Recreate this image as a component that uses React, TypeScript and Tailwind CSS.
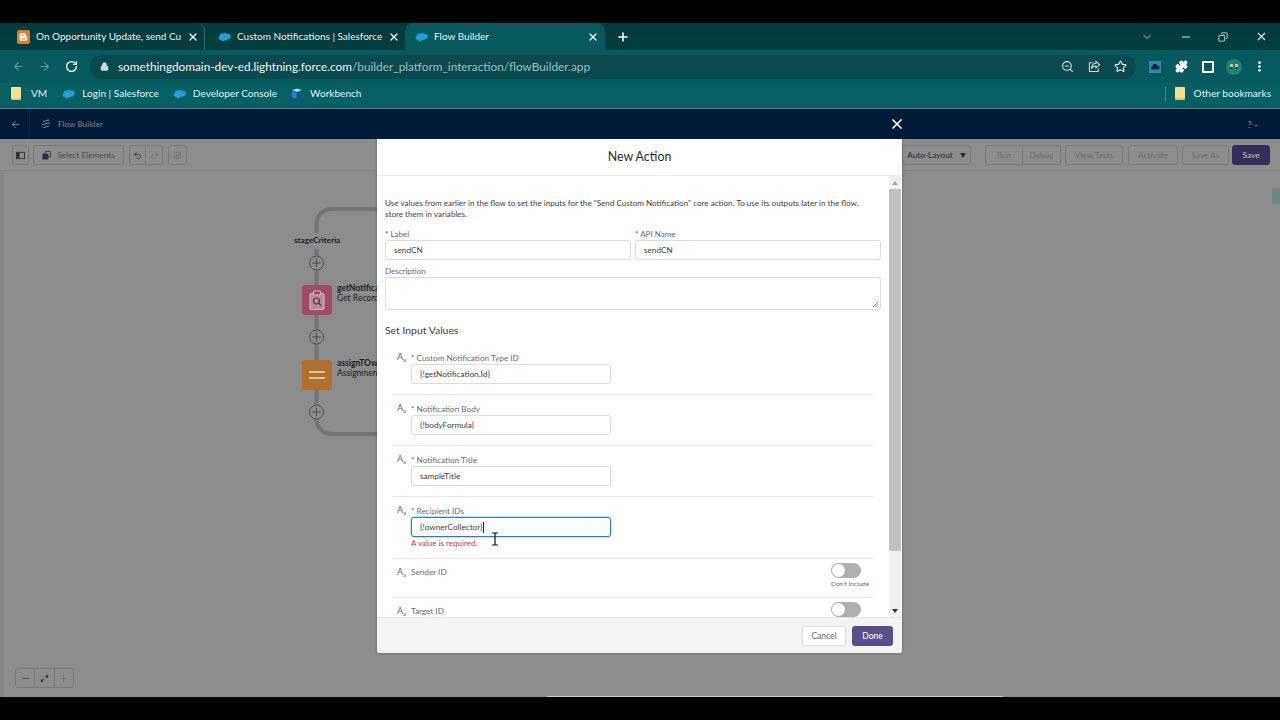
import {
  ArrowLeft,
  ArrowRight,
  ChevronDown,
  Lock,
  Minus,
  Plus,
  RotateCw,
  Star,
  X,
  ZoomOut,
  Puzzle,
  EllipsisVertical,
  Undo2,
  Redo2,
  Settings,
  Copy,
  Equal,
} from "lucide-react"

const sans = "font-['Lato','Open_Sans',sans-serif]"

function Cloud({ className }: { className?: string }) {
  return (
    <svg viewBox="0 0 16 11" className={className}>
      <path
        d="M6.6 1.4A2.9 2.9 0 0 1 8.7.5c1 0 1.9.6 2.4 1.4a3 3 0 0 1 1.3-.3A3.3 3.3 0 0 1 15.7 5a3.3 3.3 0 0 1-3.9 3.2 2.4 2.4 0 0 1-3.1 1 2.7 2.7 0 0 1-5-.1A2.6 2.6 0 0 1 .8 6.5a2.6 2.6 0 0 1 1.3-2.3A3 3 0 0 1 6.6 1.4z"
        fill="#1f9fdc"
      />
    </svg>
  )
}

function BloggerLogo() {
  return (
    <svg viewBox="0 0 13 14" className="w-[13px] h-[14px] shrink-0">
      <rect width="13" height="14" rx="2" fill="#e07a2c" />
      <path d="M4.4 3h2.8c1.2 0 2 .8 2 1.9v.9c0 .3.2.5.5.5.4 0 .6.2.6.6v2.2c0 1.2-.9 2-2 2H4.4c-1 0-1.8-.8-1.8-1.8V4.8c0-1 .8-1.8 1.8-1.8z" fill="#f8efe6" />
      <path d="M4.8 5.2h2M4.8 8.8h3.4" stroke="#e07a2c" strokeWidth="1" />
    </svg>
  )
}

function BookmarkFolder() {
  return <div className="w-[10px] h-[13px] rounded-[1px] bg-[#f8df8f] border-b-2 border-[#e8c468]" />
}

function Tab({
  icon,
  title,
  active,
  divider,
  width,
}: {
  icon: React.ReactNode
  title: string
  active?: boolean
  divider?: boolean
  width: string
}) {
  return (
    <div
      className={`${width} h-[27px] flex items-center pl-[8px] pr-[6px] gap-[6px] shrink-0 rounded-t-lg ${
        active ? "bg-[#075a5c]" : ""
      } ${divider ? "border-r border-[#2f6f6d]" : ""}`}
    >
      {icon}
      <span className="flex-1 whitespace-nowrap text-[10px] text-[#e6f1f0]">{title}</span>
      <X className="w-[12px] h-[12px] text-white shrink-0" strokeWidth={2.4} />
    </div>
  )
}

function Browser() {
  return (
    <div className={`${sans} shrink-0`}>
      {/* tab strip */}
      <div className="h-[27px] bg-gradient-to-b from-[#023a3a] to-[#04403f] flex items-center pl-[9px]">
        <Tab width="w-[196px]" divider title="On Opportunity Update, send Cu" icon={<BloggerLogo />} />
        <Tab width="w-[195px] ml-[5px]" title="Custom Notifications | Salesforce" icon={<Cloud className="w-[13px] h-[10px] shrink-0" />} />
        <Tab width="w-[200px]" active title="Flow Builder" icon={<Cloud className="w-[13px] h-[10px] shrink-0 ml-[2px]" />} />
        <Plus className="w-[14px] h-[14px] text-white ml-[11px]" strokeWidth={2.6} />
        <div className="flex-1" />
        <ChevronDown className="w-[12px] h-[12px] text-[#a9c4c3]" />
        <Minus className="w-[12px] h-[12px] text-[#dbe8e7] ml-[27px]" />
        <Copy className="w-[10px] h-[10px] text-[#dbe8e7] ml-[26px] -scale-x-100" />
        <X className="w-[13px] h-[13px] text-[#dbe8e7] ml-[27px] mr-[12px]" />
      </div>
      {/* address bar */}
      <div className="h-[33px] bg-[#065a5d] flex items-center pl-[12px]">
        <ArrowLeft className="w-[13px] h-[13px] text-[#5f9c9c]" />
        <ArrowRight className="w-[13px] h-[13px] text-[#5f9c9c] ml-[13px]" />
        <RotateCw className="w-[13px] h-[13px] text-white ml-[14px]" strokeWidth={2.4} />
        <div className="w-[1046px] h-[24px] ml-[12px] rounded-full bg-[#0a4a4c] flex items-center pl-[10px]">
          <Lock className="w-[9px] h-[9px] text-[#cfe0df]" fill="#cfe0df" />
          <span className="ml-[9px] text-[11.8px] text-[#eef5f5] whitespace-nowrap">
            somethingdomain-dev-ed.lightning.force.com
            <span className="text-[#9cc0c0]">/builder_platform_interaction/flowBuilder.app</span>
          </span>
          <div className="flex-1" />
          <ZoomOut className="w-[13px] h-[13px] text-[#cfe0df]" />
          <svg viewBox="0 0 14 14" className="w-[13px] h-[13px] ml-[14px]" fill="none" stroke="#cfe0df" strokeWidth="1.1">
            <path d="M5 3H1.5v9.5h9.5V9" />
            <path d="M8.5 1.5 12.5 5 8.5 8.5V6.5C6 6.5 4.5 7.5 3.8 9.5 3.8 6 5.5 3.8 8.5 3.6z" />
          </svg>
          <Star className="w-[13px] h-[13px] text-[#e6f1f0] ml-[13px] mr-[9px]" />
        </div>
        <div className="w-[12px] h-[12px] ml-[13px] bg-[#2f86b8] flex items-center justify-center">
          <svg viewBox="0 0 16 11" className="w-[9px] h-[6px]">
            <path d="M3 10a3 3 0 0 1 0-6 4 4 0 0 1 8-1 3.5 3.5 0 0 1 2 7z" fill="#08222e" />
          </svg>
        </div>
        <Puzzle className="w-[13px] h-[13px] text-white ml-[14px]" fill="white" />
        <div className="w-[12px] h-[12px] ml-[14px] border-[2.5px] border-white" />
        <div className="w-[16px] h-[16px] rounded-full bg-[#1f8274] ml-[12px] flex items-center justify-center gap-[2px]">
          <div className="w-[3px] h-[5px] bg-[#c9c47a] border-b-2 border-[#24453f]" />
          <div className="w-[3px] h-[5px] bg-[#c9c47a] border-b-2 border-[#24453f]" />
        </div>
        <EllipsisVertical className="w-[13px] h-[13px] text-white ml-[11px]" strokeWidth={3} />
      </div>
      {/* bookmarks */}
      <div className="h-[26px] pb-[4px] bg-[#055f63] border-b border-[#3f8587] flex items-center pl-[11px] text-[10.1px] text-[#e6f1f0]">
        <BookmarkFolder />
        <span className="ml-[10px]">VM</span>
        <Cloud className="w-[13px] h-[10px] ml-[15px]" />
        <span className="ml-[7px]">Login | Salesforce</span>
        <Cloud className="w-[13px] h-[10px] ml-[14px]" />
        <span className="ml-[7px]">Developer Console</span>
        <svg viewBox="0 0 12 12" className="w-[12px] h-[12px] ml-[14px]">
          <path d="M1 2l5-1.5L11 2 6 4z" fill="#a9d4ee" />
          <path d="M1 3l4.5 1.6V11L1 9z" fill="#2f7fc4" />
          <path d="M11 3L6.5 4.6V11L11 9z" fill="#1b4f8f" />
        </svg>
        <span className="ml-[7px]">Workbench</span>
        <div className="flex-1" />
        <div className="w-px h-[14px] bg-[#3f8587]" />
        <div className="ml-[9px]">
          <BookmarkFolder />
        </div>
        <span className="ml-[9px] mr-[9px]">Other bookmarks</span>
      </div>
    </div>
  )
}

function ToolButton({
  children,
  className,
  tone = "bg-[#8c8c8c] border-[#787878] text-[#6d6d6d]",
}: {
  children: React.ReactNode
  className?: string
  tone?: string
}) {
  return (
    <div className={`h-[20px] border rounded-[3px] flex items-center justify-center text-[8.3px] ${tone} ${className ?? ""}`}>
      {children}
    </div>
  )
}

function Canvas() {
  return (
    <div className="relative flex-1 bg-[#8c8c8c] overflow-hidden">
      <div className="h-[32px] pt-[1px] border-b border-[#808080] flex items-center justify-between pl-[12px] pr-[10px]">
        <div className="flex items-center">
          <ToolButton className="w-[17px]">
            <svg viewBox="0 0 10 10" className="w-[9px] h-[9px]">
              <rect x="0.5" y="1.5" width="9" height="7" fill="none" stroke="#2f2f2f" />
              <rect x="1" y="2" width="3" height="6" fill="#2f2f2f" />
            </svg>
          </ToolButton>
          <ToolButton className="w-[91px] ml-[4px] gap-[6px]" tone="bg-[#8c8c8c] border-[#787878] text-[#4f4f4f]">
            <svg viewBox="0 0 10 10" className="w-[9px] h-[9px]">
              <rect x="3.5" y="0.5" width="6" height="6" rx="1" fill="none" stroke="#2b2b40" />
              <rect x="0.5" y="3" width="6.5" height="6.5" rx="1" fill="#2b2b40" />
            </svg>
            Select Elements
          </ToolButton>
          <ToolButton className="w-[17px] ml-[5px] rounded-r-none">
            <Undo2 className="w-[9px] h-[9px] text-[#2f2f2f]" />
          </ToolButton>
          <ToolButton className="w-[17px] rounded-l-none border-l-0">
            <Redo2 className="w-[9px] h-[9px] text-[#6d6d6d]" />
          </ToolButton>
          <ToolButton className="w-[19px] ml-[5px]">
            <Settings className="w-[9px] h-[9px] text-[#6d6d6d]" />
          </ToolButton>
        </div>
        <div className="flex items-center">
          <ToolButton className="w-[69px] gap-[7px] mr-[14px]" tone="bg-[#8c8c8c] border-[#787878] text-[#2a2a2a]">
            Auto-Layout
            <span className="w-0 h-0 border-x-[3.5px] border-x-transparent border-t-[5px] border-t-[#2f2f2f]" />
          </ToolButton>
          <ToolButton className="w-[38px] rounded-r-none">Run</ToolButton>
          <ToolButton className="w-[38px] rounded-l-none border-l-0">Debug</ToolButton>
          <ToolButton className="w-[58px] ml-[4px]">View Tests</ToolButton>
          <ToolButton className="w-[50px] ml-[5px]">Activate</ToolButton>
          <ToolButton className="w-[47px] ml-[4px]">Save As</ToolButton>
          <ToolButton className="w-[38px] ml-[3px]" tone="bg-[#372d5c] border-[#372d5c] text-[#c9c6d4]">
            Save
          </ToolButton>
        </div>
      </div>

      {/* left edge shade */}
      <div className="absolute left-0 top-[32px] bottom-0 w-[4px] bg-[#858585]" />

      {/* flow connectors */}
      <svg className="absolute left-0 top-0 w-[400px] h-[320px]" viewBox="0 0 400 320" fill="none">
        <path
          d="M316.5 100V85a15 15 0 0 1 15-15H400M316.5 110V280a15 15 0 0 0 15 15H400"
          stroke="#747474"
          strokeWidth="4"
        />
        {[124, 198, 273].map((cy) => (
          <g key={cy}>
            <circle cx="316.5" cy={cy} r="7" fill="#8c8c8c" stroke="#4f4f4f" />
            <path d={`M316.5 ${cy - 4.5}v9M312 ${cy}h9`} stroke="#4f4f4f" />
          </g>
        ))}
      </svg>
      <div className="absolute left-[291px] top-[94px] h-[14px] px-[3px] rounded-[3px] bg-[#8c8c8c] text-[8.1px] leading-[14px] font-bold text-[#1d1d1d]">
        stageCriteria
      </div>
      <div className="absolute left-[302px] top-[146px] w-[30px] h-[30px] rounded-[3px] bg-[#a34a68] flex items-center justify-center">
        <svg viewBox="0 0 20 20" className="w-[20px] h-[20px]">
          <rect x="3" y="3.5" width="14" height="16" rx="1.5" fill="#b88a99" stroke="#cdb4bd" strokeWidth="1.2" />
          <rect x="6.5" y="1" width="7" height="4" rx="1" fill="#a34a68" stroke="#cdb4bd" strokeWidth="1.2" />
          <circle cx="9.5" cy="11" r="3" fill="none" stroke="#5a2f3f" strokeWidth="1.2" />
          <path d="M11.7 13.2l2.5 2.5" stroke="#5a2f3f" strokeWidth="1.2" />
        </svg>
      </div>
      <div className="absolute left-[337px] top-[144px] text-[8.5px] leading-[10px] text-[#1d1d1d]">
        <div className="font-bold">getNotifica</div>
        <div>Get Record</div>
      </div>
      <div className="absolute left-[302px] top-[221px] w-[30px] h-[30px] rounded-[3px] bg-[#b06f2a] flex items-center justify-center">
        <Equal className="w-[24px] h-[24px] text-[#d8c3a5]" strokeWidth={2.2} />
      </div>
      <div className="absolute left-[337px] top-[219px] text-[8.5px] leading-[10px] text-[#1d1d1d]">
        <div className="font-bold">assignTOw</div>
        <div>Assignment</div>
      </div>

      {/* right edge tab */}
      <div className="absolute right-0 top-[49px] w-[8px] h-[16px] bg-[#6d8686] rounded-l-[2px]" />

      {/* zoom controls */}
      <div className="absolute left-[15px] top-[529px] h-[20px] w-[59px] border border-[#787878] rounded-[3px] flex items-center">
        <div className="flex-1 h-full flex items-center justify-center border-r border-[#787878]">
          <Minus className="w-[11px] h-[11px] text-[#4f4f4f]" />
        </div>
        <div className="flex-1 h-full flex items-center justify-center border-r border-[#787878]">
          <svg viewBox="0 0 10 10" className="w-[9px] h-[9px]">
            <path d="M1 9l3-3M6 4l3-3" stroke="#333" strokeWidth="1" />
            <rect x="1" y="6" width="2.5" height="2.5" fill="#333" />
            <rect x="6.5" y="1.5" width="2.5" height="2.5" fill="#333" />
          </svg>
        </div>
        <div className="flex-1 h-full flex items-center justify-center">
          <Plus className="w-[11px] h-[11px] text-[#747474]" />
        </div>
      </div>

      <div className="absolute left-[547px] bottom-0 w-[456px] h-px bg-[#c9c9c9]" />
      <Modal />
    </div>
  )
}

function TypeIcon() {
  return (
    <span className="w-[14px] shrink-0 text-[9px] leading-[10px] text-[#5f5f5f]">
      A<span className="relative top-[2px] text-[6px]">a</span>
    </span>
  )
}

function InputRow({
  label,
  value,
  focused,
  error,
}: {
  label: string
  value: string
  focused?: boolean
  error?: string
}) {
  return (
    <div className={`flex pl-[5px] border-b border-[#e8e8e8] ${error ? "h-[62px]" : "h-[51px]"}`}>
      <div className="mt-[8px] flex">
        <TypeIcon />
      </div>
      <div>
        <div className="mt-[9px] h-[10px] text-[8.2px] leading-[10px] text-[#6a6a6a]">
          <span className="text-[#9c4a4a]">*</span> {label}
        </div>
        <div
          className={`mt-[1px] w-[200px] h-[20px] rounded-[3px] pl-[8px] flex items-center text-[8.2px] text-[#3e3e3c] ${
            focused ? "border border-[#2a7fae] shadow-[0_0_2px_#1b96d8]" : "border border-[#dcdcdc]"
          }`}
        >
          {value}
          {focused && <span className="w-px h-[11px] bg-[#222]" />}
        </div>
        {error && <div className="mt-[1px] text-[8px] leading-[10px] text-[#b5375c]">{error}</div>}
      </div>
    </div>
  )
}

function ToggleRow({ label, note, border }: { label: string; note?: string; border?: boolean }) {
  return (
    <div className={`flex pl-[5px] pr-[7px] justify-between ${border ? "h-[39px] border-b border-[#e8e8e8]" : "h-[30px]"}`}>
      <div className="flex mt-[8px] text-[8.2px] leading-[10px] text-[#6a6a6a]">
        <TypeIcon />
        {label}
      </div>
      <div className="w-[36px] mt-[4px]">
        <div className="w-[30px] h-[15px] rounded-full bg-[#b0b0b0] p-[1px]">
          <div className="w-[13px] h-[13px] rounded-full bg-white" />
        </div>
        {note && <div className="mt-[2px] text-[6.5px] leading-[8px] whitespace-nowrap text-[#6a6a6a]">{note}</div>}
      </div>
    </div>
  )
}

function Modal() {
  return (
    <div className="absolute left-[377px] top-0 w-[525px] h-[514px] bg-white rounded-b-[3px] flex flex-col shadow-[0_0_3px_rgba(0,0,0,0.3)]">
      <div className="h-[37px] pt-[1px] shrink-0 flex items-center justify-center text-[12.4px] text-[#2b2b2b] border-b border-[#ececec]">
        New Action
      </div>
      <div className="flex-1 flex min-h-0">
        <div className="flex-1 min-w-0 overflow-hidden pl-[8px] pr-[8px]">
          <p className="mt-[22px] max-w-[488px] text-[8.1px] leading-[11px] text-[#3e3e3c]">
            Use values from earlier in the flow to set the inputs for the "Send Custom Notification" core action. To use its outputs later in the flow, store them in variables.
          </p>
          <div className="mt-[9px] flex gap-[4px]">
            <div className="flex-1">
              <div className="h-[10px] text-[8px] leading-[10px] text-[#6a6a6a]">
                <span className="text-[#9c4a4a]">*</span> Label
              </div>
              <div className="mt-[1px] h-[20px] pt-[1px] border border-[#dcdcdc] rounded-[3px] pl-[8px] flex items-center text-[8.2px] text-[#3e3e3c]">
                sendCN
              </div>
            </div>
            <div className="flex-1">
              <div className="h-[10px] text-[8px] leading-[10px] text-[#6a6a6a]">
                <span className="text-[#9c4a4a]">*</span> API Name
              </div>
              <div className="mt-[1px] h-[20px] pt-[1px] border border-[#dcdcdc] rounded-[3px] pl-[8px] flex items-center text-[8.2px] text-[#3e3e3c]">
                sendCN
              </div>
            </div>
          </div>
          <div className="mt-[6px] h-[10px] text-[8px] leading-[10px] text-[#6a6a6a]">Description</div>
          <div className="relative mt-[1px] h-[33px] border border-[#dcdcdc] rounded-[3px]">
            <svg viewBox="0 0 8 8" className="absolute right-[1px] bottom-[1px] w-[7px] h-[7px]">
              <path d="M1 7l6-6M4 7l3-3" stroke="#555" strokeWidth="0.8" />
            </svg>
          </div>
          <div className="mt-[13px] h-[14px] text-[10.4px] leading-[14px] text-[#3e3e3c]">Set Input Values</div>
          <div className="mt-[7px] ml-[7px] mr-[7px]">
            <InputRow label="Custom Notification Type ID" value="{!getNotification.Id}" />
            <InputRow label="Notification Body" value="{!bodyFormula}" />
            <InputRow label="Notification Title" value="sampleTitle" />
            <InputRow label="Recipient IDs" value="{!ownerCollector}" focused error="A value is required." />
            <ToggleRow label="Sender ID" note="Don't Include" border />
            <ToggleRow label="Target ID" />
          </div>
        </div>
        {/* scrollbar */}
        <div className="w-[12px] mr-[1px] shrink-0 bg-[#f1f1f1] flex flex-col items-center">
          <div className="h-[13px] flex items-center">
            <span className="w-0 h-0 border-x-[3px] border-x-transparent border-b-[4px] border-b-[#a3a3a3]" />
          </div>
          <div className="w-full h-[362px] bg-[#c1c1c1]" />
          <div className="flex-1" />
          <div className="h-[13px] flex items-center">
            <span className="w-0 h-0 border-x-[3px] border-x-transparent border-t-[4px] border-t-[#333]" />
          </div>
        </div>
      </div>
      <div className="h-[36px] pt-[1px] shrink-0 bg-[#f3f3f3] border-t border-[#e2e2e2] rounded-b-[3px] flex items-center justify-end pr-[9px] gap-[6px]">
        <div className="w-[44px] h-[20px] rounded-[3px] bg-white border border-[#dcdcdc] flex items-center justify-center text-[8.5px] text-[#54698d]">
          Cancel
        </div>
        <div className="w-[41px] h-[20px] rounded-[3px] bg-[#5a4e8c] flex items-center justify-center text-[8.5px] text-white">
          Done
        </div>
      </div>
    </div>
  )
}

function CursorBeam() {
  return (
    <svg viewBox="0 0 8 14" className="absolute left-[491px] top-[532px] w-[8px] h-[14px]">
      <path d="M1 1h6M4 1v12M1 13h6" stroke="#111" strokeWidth="1.2" fill="none" />
    </svg>
  )
}

export default function App() {
  return (
    <div className={`relative w-[1280px] h-[720px] overflow-hidden bg-black flex flex-col pt-[23px] pb-[23px] ${sans}`}>
      <Browser />
      <div className="relative h-[30px] shrink-0 bg-[#001a38] flex items-center pl-[10px] pr-[22px] text-[8.2px] text-[#7c8794]">
        <ArrowLeft className="w-[11px] h-[11px]" />
        <div className="w-px h-[30px] ml-[8px] bg-[#0a2442]" />
        <svg viewBox="0 0 10 10" className="w-[10px] h-[10px] ml-[11px]" fill="none" stroke="#9aa3ad" strokeWidth="0.9">
          <path d="M2 2.5c2 0 3-1.500 6-1.500M1 5.500c3 0 4-1.500 8-1.500M2.500 8.500c2 0 3-1.500 5.500-1.500" />
        </svg>
        <span className="ml-[7px]">Flow Builder</span>
        <div className="flex-1" />
        <span className="text-[10px]">? -</span>
        <X className="absolute left-[889px] top-[7px] w-[16px] h-[16px] text-white" strokeWidth={2.6} />
      </div>
      <Canvas />
      <CursorBeam />
    </div>
  )
}
